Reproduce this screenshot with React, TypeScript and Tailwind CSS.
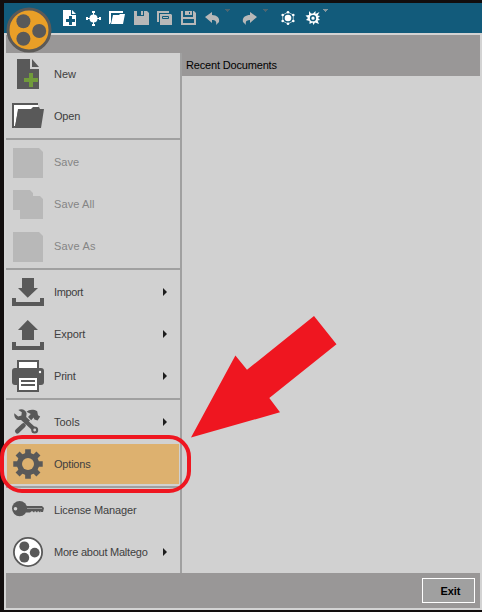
import type { ReactNode } from "react";

const INK = "#595959";
const MUTED = "#b8b8b8";

const gearPath = (cx: number, cy: number, outer: number, inner: number, tooth: number) => {
  const points: string[] = [];
  for (let i = 0; i < 8; i++) {
    const a = (i * Math.PI) / 4;
    const steps: [number, number][] = [
      [inner, -tooth * 1.4],
      [outer, -tooth],
      [outer, tooth],
      [inner, tooth * 1.4],
    ];
    for (const [r, d] of steps) {
      points.push(`${(cx + r * Math.cos(a + d)).toFixed(2)},${(cy + r * Math.sin(a + d)).toFixed(2)}`);
    }
  }
  return points.join(" ");
};

const icons: Record<string, ReactNode> = {
  new: (
    <>
      <path d="M5 1h13v10h9v20H5z" fill={INK} />
      <path d="M20 1v8h7z" fill={INK} />
      <path d="M17 15h4v5h5v4h-5v5h-4v-5h-5v-4h5z" fill="#719b3b" />
    </>
  ),
  open: (
    <>
      <path d="M0 3h26v3h-4v4L6 27l-4 1H0z" fill={INK} />
      <path d="M2 5h24v3l-20 3-3 15H2z" fill="#fff" />
      <path d="M6 9h13l2-2h6l1 2h4l-3 19H3z" fill={INK} />
    </>
  ),
  save: <path d="M1 2h26l4 4v26H1z" fill={MUTED} />,
  saveAll: <path d="M1 2h17l3 3v3h7l3 3v20H8v-9H1z" fill={MUTED} />,
  import: <path d="M10 2h12v10h4L15.7 21.7 6 12h4zM0 22h4v4h24v-4h4v8H0z" fill={INK} />,
  export: <path d="M10 22V12H6l9.7-10L26 12h-4v10zM0 24h4v4h24v-4h4v8H0z" fill={INK} />,
  print: (
    <>
      <path d="M5 0h22v11H5z" fill={INK} />
      <path d="M7 2h18v6H7z" fill="#fff" />
      <rect x="0" y="8" width="32" height="17" rx="3" fill={INK} />
      <path d="M5 18h22v14H5z" fill={INK} />
      <path d="M7 18h18v12H7z" fill="#fff" />
      <path d="M9 20h14v2H9zM9 24h14v2H9z" fill={INK} />
      <circle cx="28" cy="12" r="1.2" fill="#fff" />
    </>
  ),
  tools: (
    <>
      <path d="M9 11 23 24" stroke={INK} strokeWidth="4.4" />
      <path d="M2.3 7.2 6.2 10.4l3.2-1 .4-3.2L6.3 4C10 2.3 14 4 14.6 7.6L14.2 11 18 14.5 14 18.3l-4.6-4.6C5.6 15.2 1.6 12.4 2.3 7.2z" fill={INK} />
      <circle cx="22.7" cy="24" r="3.5" fill={INK} />
      <circle cx="22.7" cy="24" r="1.4" fill="#d3d3d3" />
      <path d="M5.3 25.2 11.5 19.4" stroke={INK} strokeWidth="4.6" strokeLinecap="round" />
      <path d="M14.5 5.8C17 3.3 21.5 3 25.2 5.2l.8 4 2.2 1.4-2.6 4-3.2-1.2-.8-2-2.4 2.8-3.2-3.3 2.8-3z" fill={INK} />
    </>
  ),
  options: (
    <>
      <polygon points={gearPath(16, 16, 15, 10.9, 0.19)} fill={INK} />
      <circle cx="16" cy="16" r="11" fill={INK} />
      <circle cx="16" cy="16" r="6" fill="#ddb16f" />
    </>
  ),
  license: (
    <>
      <circle cx="7.6" cy="14.6" r="7.6" fill={INK} />
      <circle cx="3.5" cy="14.7" r="1.8" fill="#d3d3d3" />
      <path d="M14 12h16l2 2-1 4h-2v-1l-1 1.5-2-1.5-1 1.5-2-1.5-1 1.5-2-1.5-2 1.5h-4z" fill={INK} />
      <path d="M15 14.5h15" stroke="#999" strokeWidth="1" />
    </>
  ),
  maltego: (
    <>
      <circle cx="16" cy="16" r="14.1" fill="#fff" stroke={INK} strokeWidth="1.8" />
      <circle cx="12.3" cy="10.3" r="4.9" fill={INK} />
      <circle cx="22.7" cy="16.6" r="4.9" fill={INK} />
      <circle cx="12.3" cy="21.7" r="4.9" fill={INK} />
    </>
  ),
};

type Item = {
  label: string;
  icon: string;
  submenu?: boolean;
  disabled?: boolean;
  active?: boolean;
  tracking?: string;
};

const groups: Item[][] = [
  [
    { label: "New", icon: "new" },
    { label: "Open", icon: "open", tracking: "tracking-[-0.2px]" },
  ],
  [
    { label: "Save", icon: "save", disabled: true },
    { label: "Save All", icon: "saveAll", disabled: true, tracking: "tracking-[0.1px]" },
    { label: "Save As", icon: "save", disabled: true, tracking: "tracking-[0.2px]" },
  ],
  [
    { label: "Import", icon: "import", submenu: true, tracking: "tracking-[-0.35px]" },
    { label: "Export", icon: "export", submenu: true, tracking: "tracking-[-0.1px]" },
    { label: "Print", icon: "print", submenu: true, tracking: "tracking-[-0.2px]" },
  ],
  [
    { label: "Tools", icon: "tools", submenu: true },
    { label: "Options", icon: "options", active: true, tracking: "tracking-[-0.2px]" },
  ],
  [
    { label: "License Manager", icon: "license", tracking: "tracking-[-0.12px]" },
    { label: "More about Maltego", icon: "maltego", submenu: true, tracking: "tracking-[-0.24px]" },
  ],
];

function MenuItem({ label, icon, submenu, disabled, active, tracking }: Item) {
  return (
    <div className="h-[42px] p-px">
      <div className={`flex h-10 w-[172px] items-center pl-[5px] ${active ? "bg-[#ddb16f]" : ""}`}>
        <svg width="32" height="32" viewBox="0 0 32 32" className="shrink-0">
          {icons[icon]}
        </svg>
        <span
          className={`ml-[10px] flex-1 whitespace-nowrap ${tracking ?? ""} ${disabled ? "text-[#858585]" : "text-[#404040]"}`}
        >
          {label}
        </span>
        {submenu && (
          <svg width="4" height="8" viewBox="0 0 4 8" className="mr-3">
            <path d="M0 0 4 4 0 8z" fill="#1c1c1c" />
          </svg>
        )}
      </div>
    </div>
  );
}

function Caret({ color }: { color: string }) {
  return (
    <svg width="5" height="3" viewBox="0 0 5 3" className="mt-[6px] shrink-0">
      <path d="M0 0h5v1H4v1H3v1H2V2H1V1H0z" fill={color} />
    </svg>
  );
}

function Tool({ children }: { children: ReactNode }) {
  return (
    <svg width="16" height="16" viewBox="0 0 16 16" className="mt-[7px] shrink-0">
      {children}
    </svg>
  );
}

const hexNodes = [
  [9, 2.2],
  [14.3, 5],
  [14.3, 11],
  [9, 13.8],
  [3.7, 11],
  [3.7, 5],
];

function Toolbar() {
  return (
    <div className="flex h-[30px] items-start bg-[#125b7b] pl-[57px]">
      <div className="flex gap-2">
        <Tool>
          <path d="M2 0h8v5h5v11H2z" fill="#fff" />
          <path d="M11 0v4h4z" fill="#fff" />
          <path d="M8 6h3v3h3v3h-3v3H8v-3H5V9h3z" fill="#125b7b" />
        </Tool>
        <Tool>
          <path d="M8.5 2v13M2 8.5h13" stroke="#fff" strokeWidth="1" />
          <circle cx="8.5" cy="8.5" r="4" fill="#fff" />
          <path d="M7 1h3v2H7zM7 14h3v2H7zM1 7h2v3H1zM14 7h2v3h-2z" fill="#fff" />
        </Tool>
        <Tool>
          <path d="M0 1h14v2H2v9l-1 2H0z" fill="#fff" />
          <path d="M4 5h6l1-1h5l-2 10H2z" fill="#fff" />
        </Tool>
        <Tool>
          <path d="M1 1h3v5h7V1h3l2 2v12H1z" fill={MUTED} />
          <path d="M8 1h2v4H8z" fill={MUTED} />
        </Tool>
        <Tool>
          <path d="M0 1h12v2H2v9H0z" fill={MUTED} />
          <path d="M3 4h11l1 1v10H3z" fill={MUTED} />
          <path d="M5.5 6.5h6v2h-6z" fill="none" stroke="#125b7b" />
        </Tool>
        <Tool>
          <path fillRule="evenodd" d="M0 1h2v6h10V1h1l2 2v12H0zM2 9v4h11V9z" fill={MUTED} />
          <path d="M4 1h7v4H4z" fill={MUTED} />
          <path d="M8 2h1v2H8z" fill="#125b7b" />
        </Tool>
        <Tool>
          <path d="M0 7 7 2v3c5 0 8 3 7 7l-3 3c1-4-1-5-4-5v3z" fill={MUTED} />
        </Tool>
      </div>
      <div className="ml-1">
        <Caret color="#4b6672" />
      </div>
      <div className="ml-3">
        <Tool>
          <path d="M15 7 8 2v3C3 5 0 8 1 12l3 3C3 11 5 10 8 10v3z" fill={MUTED} />
        </Tool>
      </div>
      <div className="ml-[5px]">
        <Caret color="#4b6672" />
      </div>
      <div className="ml-[11px]">
        <Tool>
          <polygon
            points={hexNodes.map((n) => n.join(",")).join(" ")}
            fill="none"
            stroke="#fff"
            strokeWidth="0.6"
          />
          <circle cx="9" cy="8" r="3.3" fill="#fff" />
          {hexNodes.map(([x, y]) => (
            <circle key={`${x}-${y}`} cx={x} cy={y} r="1.3" fill="#fff" />
          ))}
        </Tool>
      </div>
      <div className="ml-[10px]">
        <Tool>
          <path
            d="M4 1l2 2.5h2L10.500 1v3L14.500 2 12.500 5.500l2.500.5-2 2 2 2-2.500.5 1.500 3.500-4-1.500L8.500 15l-1-2.500L4.500 14v-3L1 10l2-2L.5 5.500 4 5z"
            fill="#fff"
          />
          <circle cx="8" cy="8.200" r="2.400" fill="#fff" stroke="#125b7b" strokeWidth="1.500" />
        </Tool>
      </div>
      <div className="ml-[2px]">
        <Caret color="#8397a0" />
      </div>
    </div>
  );
}

export default function App() {
  return (
    <div className="relative h-[612px] w-[482px] overflow-hidden bg-[#120e0e] pl-1 pt-[3px] font-['Liberation_Sans',Arial,sans-serif] text-[11px] leading-[14px]">
      <Toolbar />
      <div className="flex h-[577px] flex-col bg-[#d3d3d3] px-[2px] py-[2px]">
        <div className="h-[18px] bg-[#999797]" />
        <div className="flex h-[520px]">
          <nav className="w-44 shrink-0 border-r-2 border-[#a0a0a0] bg-[#d1d1d1]">
            {groups.map((group, index) => (
              <div key={group[0].label}>
                {index > 0 && (
                  <div className="py-px">
                    <div className="h-[2px] bg-[#a0a0a0]" />
                  </div>
                )}
                {group.map((item) => (
                  <MenuItem key={item.label} {...item} />
                ))}
              </div>
            ))}
          </nav>
          <main className="flex-1 bg-[#d1d1d1]">
            <h1 className="h-[23px] bg-[#999797] pl-1 pt-[5px] tracking-[-0.17px] text-black">Recent Documents</h1>
          </main>
        </div>
        <footer className="flex h-[35px] items-start justify-end bg-[#999797] pr-[5px] pt-[5px]">
          <button className="h-[25px] w-[53px] border border-white bg-[#a0a0a0] pl-1 text-[11px] font-bold tracking-[-0.1px] text-black">
            Exit
          </button>
        </footer>
      </div>
      <svg width="46" height="46" viewBox="0 0 46 46" className="absolute left-[6px] top-[7px]">
        <circle cx="23" cy="23" r="21" fill="#e99f27" stroke="#5c5a57" strokeWidth="3" />
        <circle cx="17.4" cy="14.3" r="7" fill="#595959" />
        <circle cx="33.2" cy="24" r="7" fill="#595959" />
        <circle cx="17.4" cy="31.7" r="7" fill="#595959" />
      </svg>
      <div className="absolute left-0 top-[435px] h-[58px] w-[191px] rounded-[22px] border-4 border-[#ef1620]" />
      <svg width="146" height="122" viewBox="0 0 146 122" className="absolute left-[191px] top-[316px]">
        <polygon points="123,0 145.5,28.3 78.3,82 89,96.3 0,121.5 44.4,39.5 56,53.8" fill="#ef1620" />
      </svg>
    </div>
  );
}
